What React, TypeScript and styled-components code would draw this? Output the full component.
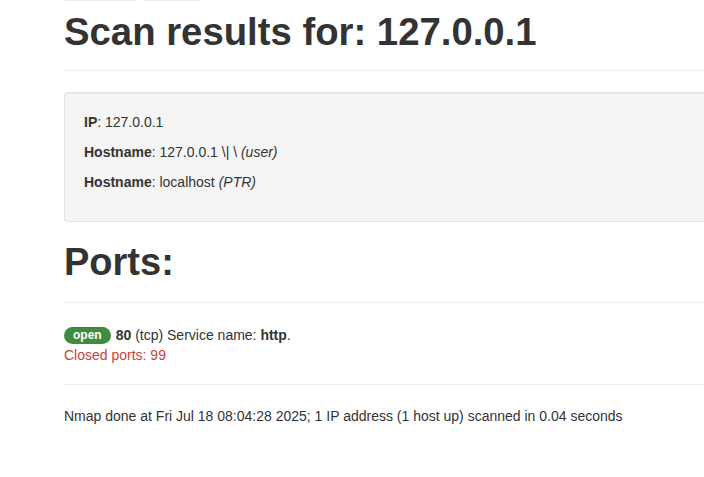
import React from "react";
import styled, { createGlobalStyle } from "styled-components";

const Global = createGlobalStyle`
  html, body { margin: 0; padding: 0; background: #fff; }
  body {
    font-family: "Liberation Sans", Arial, Helvetica, sans-serif;
    font-size: 14px;
    line-height: 20px;
    color: #333;
    overflow: hidden;
  }
`;

const Page = styled.div`
  padding: 0 0 0 64px;
`;

const ButtonRow = styled.div`
  display: flex;
  gap: 7px;
  height: 2px;
  margin-left: 1px;
`;

const GhostButton = styled.div<{ $w: number }>`
  width: ${(p) => p.$w}px;
  height: 1px;
  background: #ececec;
  border-radius: 0 0 3px 3px;
`;

const PageHeader = styled.div`
  padding-bottom: 9px;
  margin: 9px 0 21px;
  border-bottom: 1px solid #eee;
`;

const Title = styled.h1`
  font-size: 38.3px;
  font-weight: 700;
  line-height: 42px;
  margin: 0 0 8px;
  color: #333;
`;

const Well = styled.div`
  background: #f5f5f5;
  border: 1px solid #e3e3e3;
  border-right: none;
  border-radius: 4px 0 0 4px;
  box-shadow: inset 0 1px 1px rgba(0, 0, 0, 0.05);
  padding: 19px 19px 9px;
  margin-bottom: 20px;
`;

const Line = styled.p`
  margin: 0 0 10px;
  &:last-child {
    margin-bottom: 20px;
  }
`;

const Section = styled.h1`
  font-size: 38px;
  font-weight: 700;
  line-height: 40px;
  margin: 0 0 20px;
  color: #333;
`;

const Rule = styled.hr`
  border: 0;
  border-top: 1px solid #eee;
  margin: 0 0 20px;
`;

const PortBlock = styled.div`
  padding-top: 2px;
  margin-bottom: 19px;
`;

const PortLine = styled.div`
  display: flex;
  align-items: center;
  gap: 4px;
`;

const Badge = styled.span`
  display: inline-block;
  background: #3f8b41;
  color: #fff;
  font-weight: 700;
  font-size: 12px;
  line-height: 17px;
  padding: 0 9px;
  border-radius: 10px;
  margin-right: 1px;
`;

const Closed = styled.div`
  color: #c9413b;
`;

const Footer = styled.p`
  margin: 0;
  padding-top: 1px;
`;

export default function App() {
  return (
    <Page>
      <Global />
      <ButtonRow>
        <GhostButton $w={72} />
        <GhostButton $w={56} />
      </ButtonRow>
      <PageHeader>
        <Title>Scan results for: 127.0.0.1</Title>
      </PageHeader>
      <Well>
        <Line>
          <b>IP</b>: 127.0.0.1
        </Line>
        <Line>
          <b>Hostname</b>: 127.0.0.1 \| \ <i>(user)</i>
        </Line>
        <Line>
          <b>Hostname</b>: localhost <i>(PTR)</i>
        </Line>
      </Well>
      <Section>Ports:</Section>
      <Rule />
      <PortBlock>
        <PortLine>
          <Badge>open</Badge>
          <span>
            <b>80</b> (tcp) Service name: <b>http</b>.
          </span>
        </PortLine>
        <Closed>Closed ports: 99</Closed>
      </PortBlock>
      <Rule />
      <Footer>Nmap done at Fri Jul 18 08:04:28 2025; 1 IP address (1 host up) scanned in 0.04 seconds</Footer>
    </Page>
  );
}
